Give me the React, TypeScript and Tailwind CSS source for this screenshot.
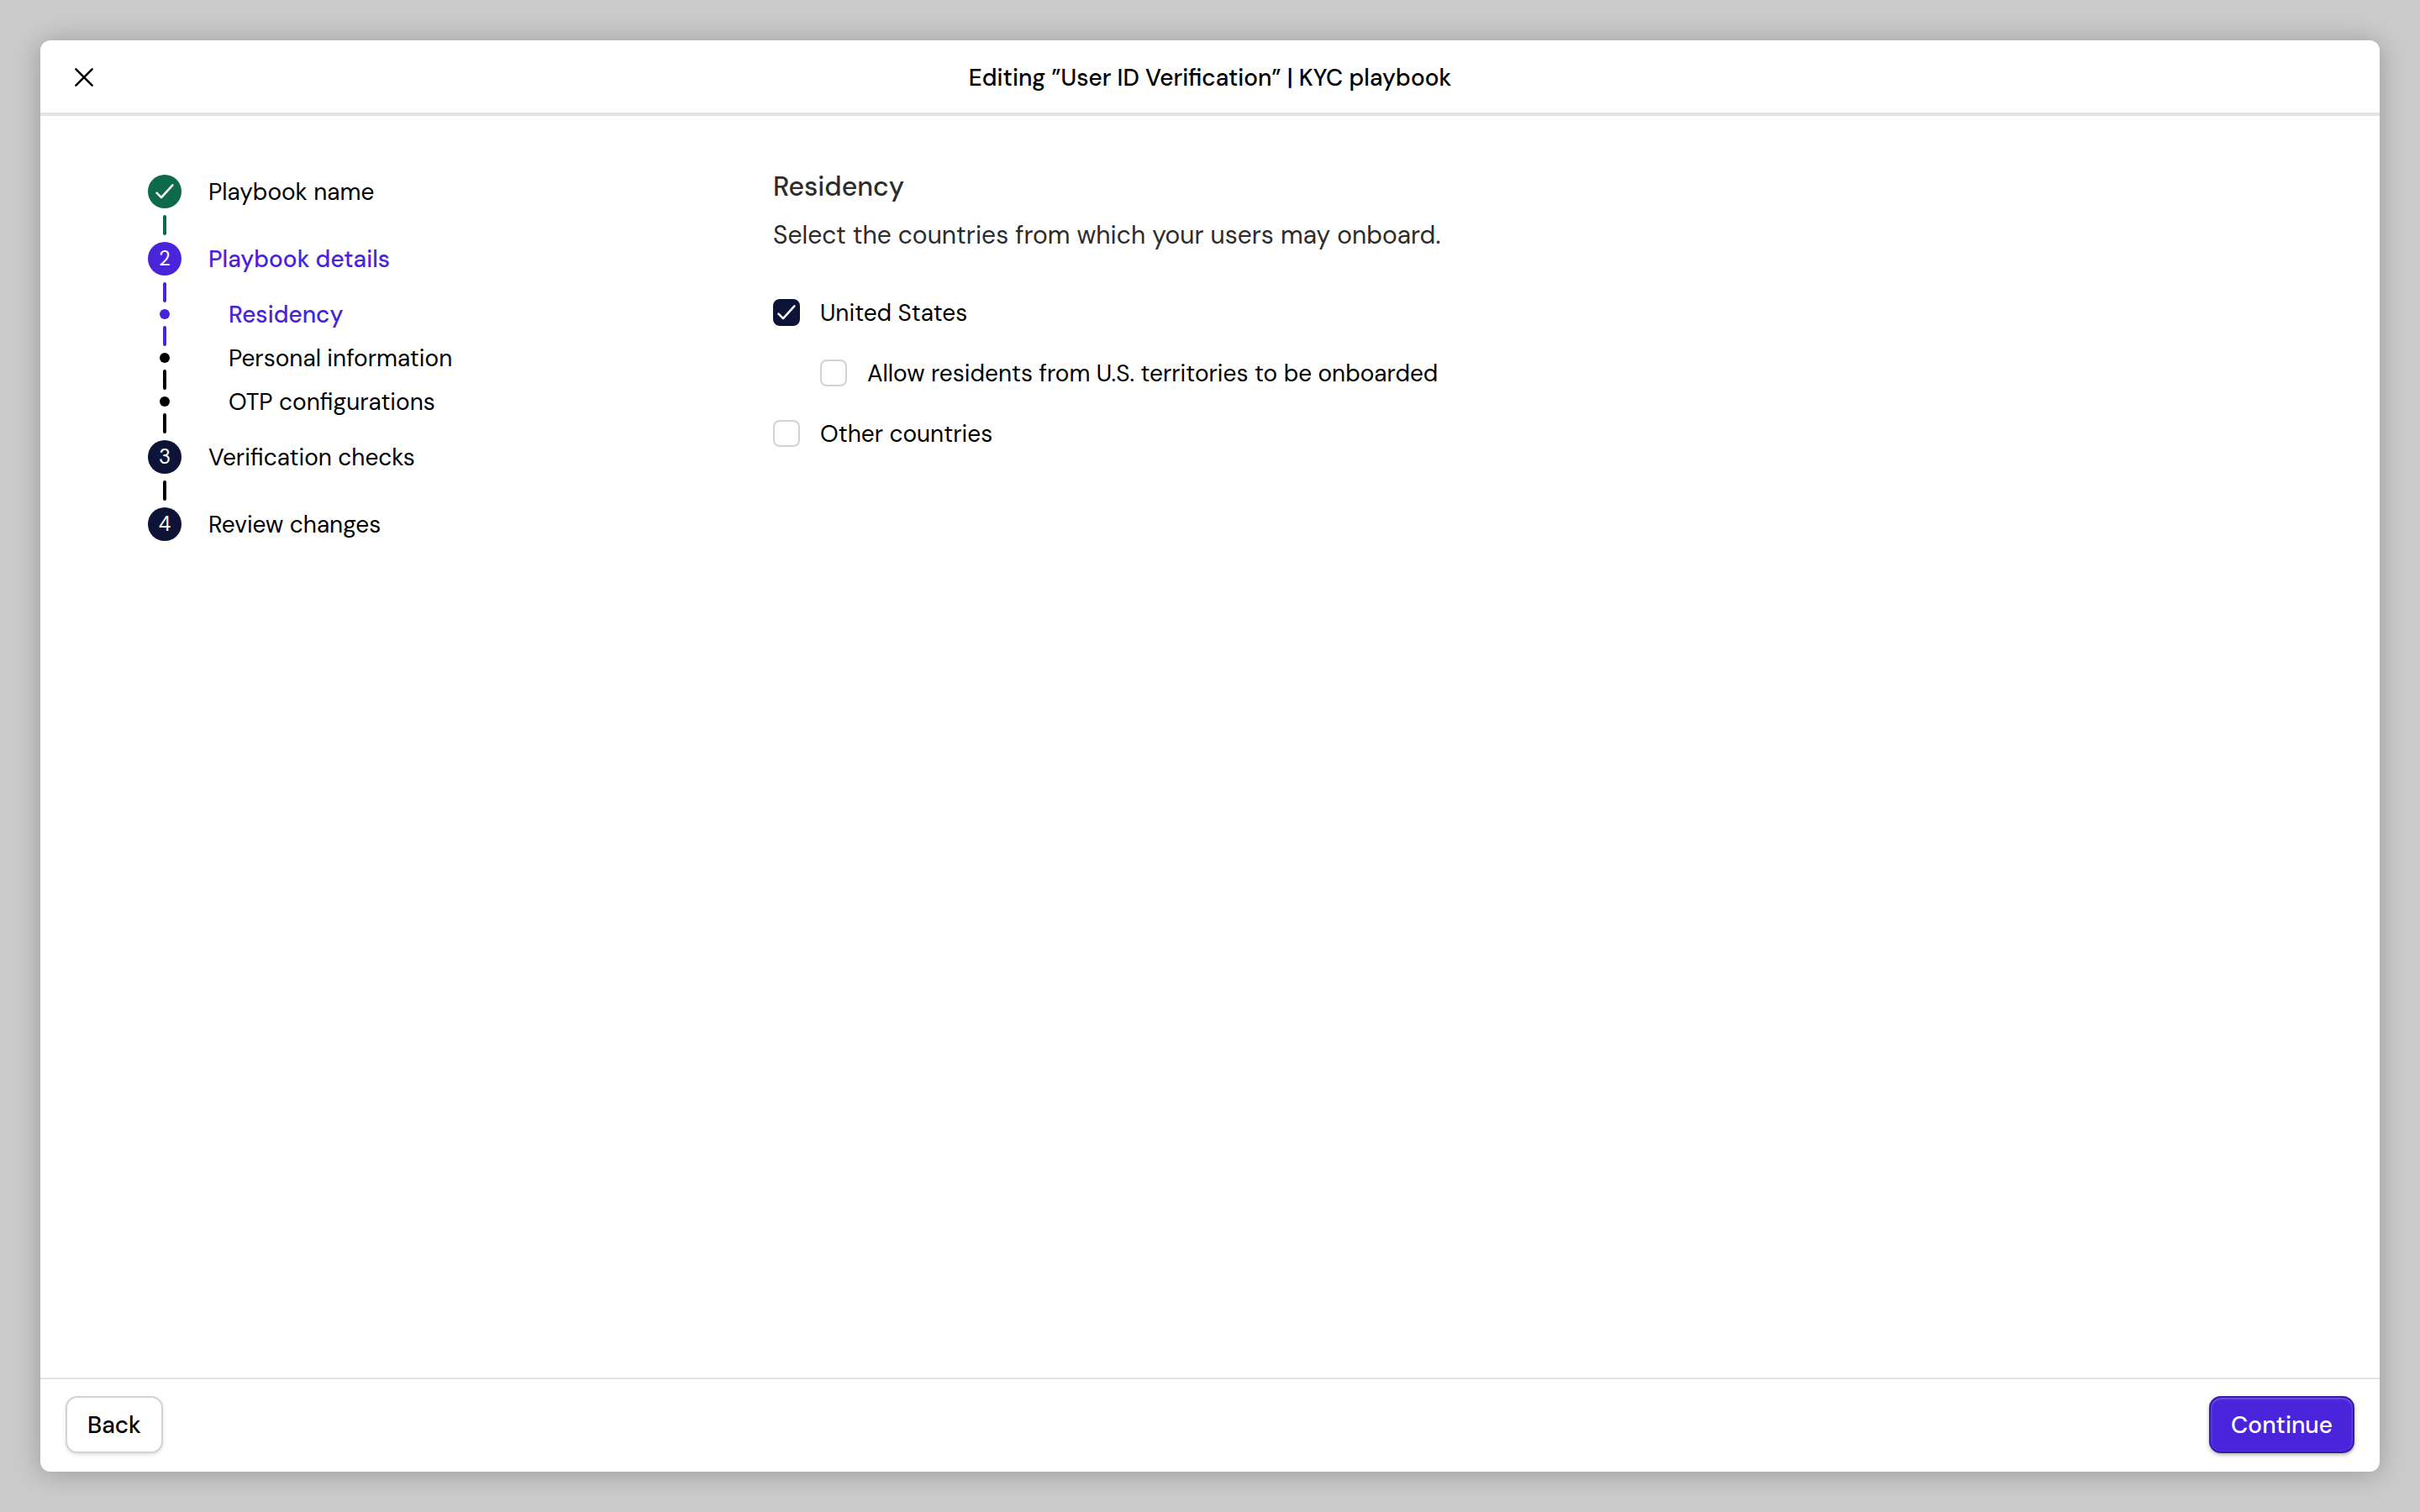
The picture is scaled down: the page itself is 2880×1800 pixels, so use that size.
import { Fragment, useState } from 'react';

type Tone = 'done' | 'active' | 'idle';
type Step = { label: string; tone: Tone; marker: string; sub?: boolean };

const steps: Step[] = [
  { label: 'Playbook name', tone: 'done', marker: 'check' },
  { label: 'Playbook details', tone: 'active', marker: '2' },
  { label: 'Residency', tone: 'active', marker: 'dot', sub: true },
  { label: 'Personal information', tone: 'idle', marker: 'dot', sub: true },
  { label: 'OTP configurations', tone: 'idle', marker: 'dot', sub: true },
  { label: 'Verification checks', tone: 'idle', marker: '3' },
  { label: 'Review changes', tone: 'idle', marker: '4' },
];

const circleTone: Record<Tone, string> = {
  done: 'bg-[#0d6b4a]',
  active: 'bg-[#4a24db]',
  idle: 'bg-[#0e1438]',
};

const lineTone: Record<Tone, string> = {
  done: 'bg-[#0d6b4a]',
  active: 'bg-[#4a24db]',
  idle: 'bg-black',
};

const textTone: Record<Tone, string> = {
  done: 'text-black',
  active: 'font-medium text-[#4a24db]',
  idle: 'text-black',
};

function CheckIcon({ className }: { className?: string }) {
  return (
    <svg viewBox="0 0 32 32" fill="none" aria-hidden="true" className={className}>
      <path
        d="M6.5 17.6 12 23.2 25.4 8.4"
        stroke="white"
        strokeWidth="2.5"
        strokeLinecap="round"
        strokeLinejoin="round"
      />
    </svg>
  );
}

function CloseIcon() {
  return (
    <svg viewBox="0 0 40 40" fill="none" aria-hidden="true" className="size-10">
      <path d="M10.4 10.4 29.6 29.6M29.6 10.4 10.4 29.6" stroke="black" strokeWidth="2.6" strokeLinecap="round" />
    </svg>
  );
}

function Stepper() {
  return (
    <nav aria-label="Progress" className="pl-32 pt-[70px]">
      <ol className="flex flex-col gap-2 text-[28px]">
        {steps.map((step, i) => (
          <Fragment key={step.label}>
            <li
              aria-current={step.label === 'Residency' ? 'step' : undefined}
              className={step.sub ? 'flex h-3 items-center gap-14' : 'flex h-10 items-center gap-8'}
            >
              <span className="flex w-10 justify-center">
                {step.sub ? (
                  <span className={`size-3 rounded-full ${lineTone[step.tone]}`} />
                ) : (
                  <span
                    className={`flex size-10 items-center justify-center rounded-full text-[24px] leading-10 text-white ${circleTone[step.tone]}`}
                  >
                    {step.marker === 'check' ? <CheckIcon className="size-8" /> : step.marker}
                  </span>
                )}
              </span>
              <span className={`pt-0.5 leading-10 whitespace-nowrap ${textTone[step.tone]}`}>{step.label}</span>
            </li>
            {i < steps.length - 1 && (
              <li aria-hidden="true" className="flex w-10 justify-center">
                <span className={`h-6 w-1 rounded-xs ${lineTone[step.tone]}`} />
              </li>
            )}
          </Fragment>
        ))}
      </ol>
    </nav>
  );
}

function Checkbox({ id, label, initial = false }: { id: string; label: string; initial?: boolean }) {
  const [checked, setChecked] = useState(initial);
  return (
    <div className="flex h-8 items-center gap-6">
      <span className="grid size-8 shrink-0">
        <input
          id={id}
          type="checkbox"
          checked={checked}
          onChange={(e) => setChecked(e.target.checked)}
          className="col-start-1 row-start-1 size-8 appearance-none rounded-lg border-2 border-[#d3d3d3] bg-white checked:border-[#0e1438] checked:bg-[#0e1438]"
        />
        {checked && <CheckIcon className="pointer-events-none col-start-1 row-start-1 size-8" />}
      </span>
      <label htmlFor={id} className="pt-0.5 text-[28px] leading-10">
        {label}
      </label>
    </div>
  );
}

export default function App() {
  return (
    <div className="flex h-screen bg-[#cbcbcb] p-12 font-['DM_Sans',Inter,sans-serif] text-black">
      <div
        role="dialog"
        aria-labelledby="dialog-title"
        className="flex min-w-0 flex-1 flex-col overflow-hidden rounded-xl bg-white shadow-[0_2px_32px_rgba(0,0,0,0.25)]"
      >
        <header className="grid h-[90px] shrink-0 grid-cols-[1fr_auto_1fr] items-center border-b-4 border-[#e2e2e2] px-8 pt-0.5">
          <button type="button" aria-label="Close" className="w-fit">
            <CloseIcon />
          </button>
          <h1 id="dialog-title" className="pt-0.5 text-[28px] leading-10 font-medium">
            Editing ”User ID Verification” | KYC playbook
          </h1>
        </header>

        <div className="grid min-h-0 flex-1 grid-cols-[1fr_1040px_1fr]">
          <Stepper />
          <main className="pt-[62px]">
            <h2 className="text-[32px] leading-[44px] font-medium text-[#2c2c2c]">Residency</h2>
            <p className="mt-2 text-[30px] leading-[56px] text-[#2c2c2c]">
              Select the countries from which your users may onboard.
            </p>
            <div className="mt-12 flex flex-col gap-10">
              <Checkbox id="us" label="United States" initial />
              <div className="pl-14">
                <Checkbox id="territories" label="Allow residents from U.S. territories to be onboarded" />
              </div>
              <Checkbox id="other" label="Other countries" />
            </div>
          </main>
        </div>

        <footer className="flex shrink-0 items-center justify-between border-t-2 border-[#e2e2e2] px-[30px] pt-5 pb-[22px]">
          <button
            type="button"
            className="rounded-[14px] border-2 border-[#d3d3d3] bg-white px-6 pt-[13px] pb-[11px] text-[28px] leading-10 font-medium shadow-[0_2px_4px_rgba(0,0,0,0.12)]"
          >
            Back
          </button>
          <button
            type="button"
            className="rounded-[14px] border-2 border-[#371aa5] bg-[#4a24db] px-6 pt-[13px] pb-[11px] text-[28px] leading-10 font-medium text-white shadow-[0_2px_4px_rgba(0,0,0,0.3),inset_0_1px_3px_rgba(255,255,255,0.35)]"
          >
            Continue
          </button>
        </footer>
      </div>
    </div>
  );
}
